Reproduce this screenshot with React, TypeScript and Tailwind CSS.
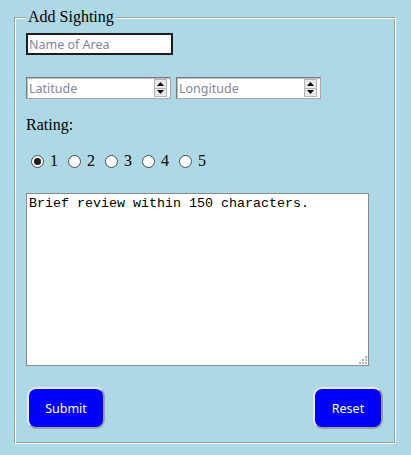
import React from 'react';

const Spinner = () => (
  <div className="flex h-[18px] w-[13px] flex-col border border-[#b4b4b4] bg-[#e9e9e9]">
    <div className="flex flex-1 items-center justify-center border-b border-[#b4b4b4]">
      <svg width="7" height="4" viewBox="0 0 7 4">
        <path d="M3.5 0L7 4H0z" fill="#000" />
      </svg>
    </div>
    <div className="flex flex-1 items-center justify-center">
      <svg width="7" height="4" viewBox="0 0 7 4">
        <path d="M0 0H7L3.5 4z" fill="#000" />
      </svg>
    </div>
  </div>
);

const NumberBox = ({ placeholder }: { placeholder: string }) => (
  <div className="flex h-[22px] w-[145px] items-center border border-t-[#7a7a7a] border-l-[#7a7a7a] border-r-[#a8a8a8] border-b-[#a8a8a8] bg-white pr-[3px] shadow-[inset_1px_1px_0_#bdbdbd]">
    <input
      type="text"
      placeholder={placeholder}
      className="h-full min-w-0 flex-1 bg-transparent pl-[2px] text-[12.5px] text-black outline-none placeholder:text-[#85859a] font-['Noto_Sans',sans-serif]"
    />
    <Spinner />
  </div>
);

const Radio = ({ value, checked }: { value: number; checked?: boolean }) => (
  <label className="flex items-center">
    <span className="flex h-[13px] w-[13px] items-center justify-center rounded-full border border-[#4a4a4a] bg-white">
      {checked && <span className="h-[7px] w-[7px] rounded-full bg-[#1e1e1e]" />}
    </span>
    <span className="ml-[6px] w-[8px]">{value}</span>
  </label>
);

const App = () => {
  return (
    <div className="min-h-[455px] bg-[#add8e6] pl-[14px] pt-[8px] font-['Liberation_Serif',serif] text-black">
      <fieldset className="w-[382px] border border-t-[#a0a0a0] border-l-[#a0a0a0] border-r-white border-b-white px-[10px] pb-[14px] pt-[7px] shadow-[inset_1px_1px_0_#ffffff,inset_-1px_-1px_0_#a0a0a0]">
        <legend className="ml-[1px] bg-[#add8e6] px-[2px] text-[16px] leading-[18px]">Add Sighting</legend>
        <div className="pl-[1px]">
          <input
            type="text"
            placeholder="Name of Area"
            className="block h-[22px] w-[147px] border-2 border-[#1c1c1c] bg-white pl-[1px] text-[12.5px] outline-none placeholder:text-[#85859a] font-['Noto_Sans',sans-serif]"
          />

          <div className="mt-[22px] flex gap-[5px]">
            <NumberBox placeholder="Latitude" />
            <NumberBox placeholder="Longitude" />
          </div>

          <p className="mt-[17px] text-[16px] leading-[18px]">Rating:</p>

          <div className="mt-[18px] flex h-[18px] items-center gap-[10px] pl-[5px] text-[16px] leading-[18px]">
            <Radio value={1} checked />
            <Radio value={2} />
            <Radio value={3} />
            <Radio value={4} />
            <Radio value={5} />
          </div>

          <div className="relative mt-[23px] h-[173px] w-[343px]">
            <textarea
              defaultValue="Brief review within 150 characters."
              className="block h-full w-full resize-none border border-[#8a8a8a] bg-white px-[2px] pt-[2px] text-[13.33px] leading-[15px] text-black outline-none font-['Liberation_Mono',monospace]"
            />
            <svg className="absolute bottom-[2px] right-[2px]" width="8" height="8" viewBox="0 0 8 8">
              <rect x="6" y="0" width="2" height="2" fill="#b4b4b4" />
              <rect x="3" y="3" width="2" height="2" fill="#b4b4b4" />
              <rect x="6" y="3" width="2" height="2" fill="#b4b4b4" />
              <rect x="0" y="6" width="2" height="2" fill="#b4b4b4" />
              <rect x="3" y="6" width="2" height="2" fill="#b4b4b4" />
              <rect x="6" y="6" width="2" height="2" fill="#b4b4b4" />
            </svg>
          </div>

          <div className="mt-[21px] flex justify-between pl-[1px] pr-[2px]">
            <button className="h-[42px] w-[78px] rounded-[9px] border-2 border-t-[#e8e8e8] border-l-[#e8e8e8] border-r-[#a0a0a0] border-b-[#a0a0a0] bg-[#0000ff] pt-[2px] text-[12.5px] text-white font-['Noto_Sans',sans-serif]">
              Submit
            </button>
            <button className="h-[42px] w-[70px] rounded-[9px] border-2 border-t-[#e8e8e8] border-l-[#e8e8e8] border-r-[#a0a0a0] border-b-[#a0a0a0] bg-[#0000ff] pt-[2px] text-[12.5px] text-white font-['Noto_Sans',sans-serif]">
              Reset
            </button>
          </div>
        </div>
      </fieldset>
    </div>
  );
};

export default App;
